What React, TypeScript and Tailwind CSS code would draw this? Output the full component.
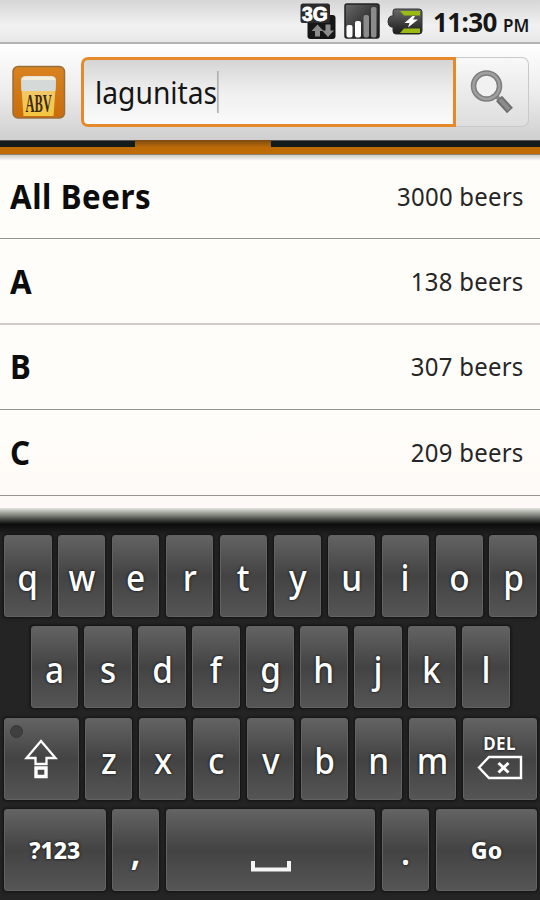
import { useState } from 'react';

interface KeyProps {
  label?: string;
  width?: string;
  className?: string;
  onPress?: () => void;
  children?: React.ReactNode;
}

const BEER_GROUPS = [
  { name: 'All Beers', count: 3000, row: 'h-[84px] border-b border-[#969492] pb-[1px]' },
  { name: 'A', count: 138, row: 'h-[86px] border-b-2 border-[#cfcbc8]' },
  { name: 'B', count: 307, row: 'h-[85px] border-b border-[#969492] pb-[1px]' },
  { name: 'C', count: 209, row: 'h-[86px] border-b border-[#969492] pb-[1px]' },
];

const LETTER_ROWS = [
  ['q', 'w', 'e', 'r', 't', 'y', 'u', 'i', 'o', 'p'],
  ['a', 's', 'd', 'f', 'g', 'h', 'j', 'k', 'l'],
  ['z', 'x', 'c', 'v', 'b', 'n', 'm'],
];

function StatusBar() {
  return (
    <div className="flex h-11 shrink-0 items-start justify-end border-b-2 border-[#b4b4b4] bg-linear-to-b from-[#d6d6d6] via-[#f1f1f1] via-60% to-[#e8e8e8] pr-[11px]">
      <svg className="mt-[3px] mr-[7px]" width="37" height="37" viewBox="0 0 37 37">
        <rect x="7.500" y="12" width="28" height="24" rx="3" fill="#161616" />
        <rect x="0.500" y="0.500" width="29.500" height="19.500" rx="2.500" fill="#2b2b2b" />
        <text transform="translate(2 17.500) scale(0.940 1)" fontFamily="Liberation Sans" fontWeight="bold" fontSize="20.500" fill="#fff" stroke="#fff" strokeWidth="0.900">3G</text>
        <path d="M17.500 21.500l6 6.500h-3.500v5.500h-5V28h-3.500z" fill="#8b8b8b" />
        <path d="M28 34l-6-6.500h3.500V21.500h5v6H34z" fill="#8b8b8b" />
      </svg>
      <svg className="mt-[3px] mr-[7px]" width="36" height="36" viewBox="0 0 36 36">
        <defs>
          <linearGradient id="signal" x1="0" y1="0" x2="1" y2="1">
            <stop offset="0" stopColor="#6a6a6a" />
            <stop offset="0.600" stopColor="#303030" />
            <stop offset="1" stopColor="#1c1c1c" />
          </linearGradient>
        </defs>
        <rect x="1" y="1" width="34" height="34" rx="2" fill="url(#signal)" stroke="#222" strokeWidth="1.500" />
        <rect x="2.500" y="22" width="6" height="12.500" rx="2" fill="#fff" />
        <rect x="11" y="18" width="6" height="16.500" rx="2" fill="#fff" />
        <rect x="19.500" y="12" width="5.500" height="22.500" rx="2" fill="#8b8b8b" />
        <rect x="27" y="4" width="5.500" height="30.500" rx="2" fill="#8b8b8b" />
      </svg>
      <svg className="mt-[8px] mr-[10px]" width="36" height="27" viewBox="0 0 36 27">
        <defs>
          <linearGradient id="cell" x1="0" y1="0" x2="0" y2="1">
            <stop offset="0" stopColor="#6a6a6a" />
            <stop offset="1" stopColor="#1a1a1a" />
          </linearGradient>
        </defs>
        <path d="M8 1h24q3 0 3 3v19q0 3-3 3H9q-3 0-3-3v-4H4q-3-1-3-5.500T4 8h2V4q0-3 2-3z" fill="url(#cell)" stroke="#333" strokeWidth="1" />
        <path d="M13 3h20v4.500H17zM17 20.500h16V25H13z" fill="#9aba14" />
        <path d="M25.500 8l-8 7h5l-1.500 4.500 10-8h-5l2-3.500z" fill="#fff" />
      </svg>
      <div className="flex items-baseline font-bold text-[#171717]">
        <span className="mt-[3px] w-[66px] text-[26px] leading-[38px] tracking-[-0.6px]">11:30</span>
        <span className="ml-[4px] w-[26px] text-[17px] leading-5 font-semibold">PM</span>
      </div>
    </div>
  );
}

function BeerLogo() {
  return (
    <svg className="mt-[21px] ml-[12px] shrink-0" width="54" height="54" viewBox="0 0 54 54">
      <defs>
        <linearGradient id="tile" x1="0" y1="0" x2="0" y2="1">
          <stop offset="0" stopColor="#d98320" />
          <stop offset="1" stopColor="#c96c0c" />
        </linearGradient>
        <linearGradient id="beer" x1="0" y1="0" x2="0" y2="1">
          <stop offset="0" stopColor="#f0c878" />
          <stop offset="1" stopColor="#f5c640" />
        </linearGradient>
      </defs>
      <rect x="1" y="1.500" width="51.500" height="51.500" rx="5" fill="url(#tile)" stroke="#98703c" strokeWidth="1.500" />
      <path d="M9 17l2.500 34h30l2.500-34z" fill="url(#beer)" />
      <path d="M9.500 26l-.5-11q0-4 5-4h25q5 0 5 4l-.5 11z" fill="#d5d9d8" />
      <path d="M9.500 15q1-3.500 5-3.500h24q4 0 5 3.500z" fill="#f3eddc" />
      <text transform="translate(13.500 47) scale(0.480 1)" fontFamily="Liberation Serif" fontWeight="bold" fontSize="26" fill="#3b2c12">ABV</text>
    </svg>
  );
}

function SearchHeader({ query }: { query: string }) {
  return (
    <header className="flex h-24 shrink-0 bg-linear-to-b from-white via-[#ededed] to-[#cfcfcf]">
      <BeerLogo />
      <div className="mt-[13px] ml-[15px] flex h-[70px] w-[375px] items-center rounded-l-[7px] border-[3px] border-[#e58a2c] bg-linear-to-b from-[#d5d5d5] via-[#efefef] to-[#fafafa] pl-[11px]">
        <span className="flex origin-left scale-x-[0.91] items-center">
          <span className="text-[31px] leading-[40px] text-[#151515]">{query}</span>
          <span className="h-[42px] w-[2px] bg-[#b5b5b5]" />
        </span>
      </div>
      <button className="mt-[13px] flex h-[70px] w-[73px] justify-start rounded-r-[7px] border border-l-0 border-[#c9c9c9] bg-linear-to-b from-[#f8f8f8] to-[#dedede]">
        <svg className="mt-[11px] ml-[13px]" width="46" height="46" viewBox="0 0 46 46">
          <path d="M27 27L31 31" stroke="#8a8a8a" strokeWidth="4" />
          <path d="M30 29.500L41 41.500" stroke="#707070" strokeWidth="8" />
          <path d="M31 30.500L40 40.500" stroke="#8c8c8c" strokeWidth="4" />
          <circle cx="17.500" cy="17" r="13" fill="#f1f1f1" stroke="#7e7e7e" strokeWidth="5.500" />
          <circle cx="17.500" cy="17" r="13" fill="none" stroke="#a0a0a0" strokeWidth="2.500" />
        </svg>
      </button>
    </header>
  );
}

function TabStrip() {
  return (
    <div className="h-[15px] shrink-0 border-b border-[#8a826f] bg-linear-to-b from-[#b96a08] to-[#bf6c05]">
      <div className="flex h-[7px] justify-between">
        <div className="w-[135px] border-t border-[#555] bg-[#131b1b]" />
        <div className="flex-1 bg-linear-to-b from-[#7b4a10] to-[#b96a08]" />
        <div className="w-[269px] border-t border-[#555] bg-[#131b1b]" />
      </div>
    </div>
  );
}

function BeerList() {
  return (
    <div className="h-[369px] shrink-0 overflow-hidden bg-linear-to-b from-[#fffdf9] from-75% to-[#fdf8f5]">
      <div className="-mb-[6px] h-[6px] bg-linear-to-b from-black/20 to-transparent" />
      {BEER_GROUPS.map(group => (
        <div key={group.name} className={`flex items-center justify-between pr-[16px] pl-[10px] ${group.row}`}>
          <span className="origin-left scale-x-[0.92] text-[34px] font-bold tracking-[0.6px] text-[#0c0c0c]">{group.name}</span>
          <span className="origin-right scale-x-[0.92] text-[26px] tracking-[0.3px] text-[#262626]">{group.count} beers</span>
        </div>
      ))}
      <div className="h-[12px]" />
      <div className="h-[16px] bg-linear-to-b from-[#e6e6e0] via-[#777a73] to-[#0d0f0c]" />
    </div>
  );
}

function Key({ label, width = 'w-[47.500px]', className = 'text-[37px]', onPress, children }: KeyProps) {
  return (
    <button
      onClick={onPress}
      className={`relative flex h-[82px] shrink-0 items-center justify-center rounded-[3px] border border-[#626262] bg-linear-to-b from-[#636363] via-[#434343] via-50% to-[#555] text-white shadow-[0_0_3px_1px_#111] ${width} ${className}`}
    >
      {label && <span className="[text-shadow:0_0_3px_#000]">{label}</span>}
      {children}
    </button>
  );
}

function Keyboard({ onType, onDelete }: { onType: (key: string) => void; onDelete: () => void }) {
  const [isShifted, setIsShifted] = useState(false);

  const letters = (row: string[]) =>
    row.map(key => {
      const letter = isShifted ? key.toUpperCase() : key;
      return (
        <Key key={key} onPress={() => onType(letter)} className="pt-[2px] text-[37px] font-medium *:scale-x-[0.9]" label={letter} />
      );
    });

  return (
    <div className="flex h-[376px] shrink-0 flex-col gap-[9.400px] bg-linear-to-b from-[#0c0c0c] to-[#242424] to-3% pt-[11px] pl-[4px]">
      <div className="flex gap-[6.450px]">{letters(LETTER_ROWS[0])}</div>
      <div className="flex gap-[6.450px] pl-[26.500px]">{letters(LETTER_ROWS[1])}</div>
      <div className="flex gap-[6.450px]">
        <Key width="w-[74.500px]" onPress={() => setIsShifted(s => !s)}>
          <span className="absolute top-[6px] left-[5px] size-[13px] rounded-full border border-[#373737] bg-[#3f3f3f]" />
          <svg className="mt-[1px]" width="36" height="42" viewBox="0 0 36 42" fill="none" stroke="#fff" strokeWidth="2.300">
            <path d="M18 3L3.500 20H12.500V26H23.500V20H32.500Z" />
            <path d="M13 30h10v8.500h-10z" strokeWidth="3.400" />
          </svg>
        </Key>
        {letters(LETTER_ROWS[2])}
        <Key width="w-[74px]" onPress={onDelete}>
          <span className="flex flex-col items-center [text-shadow:0_0_3px_#000]">
            <span className="text-[17px] leading-[16px] font-bold tracking-[0.3px]">DEL</span>
            <svg className="mt-[3px]" width="46" height="26" viewBox="0 0 46 26" fill="none" stroke="#fff" strokeWidth="2.400">
              <path d="M2 12.500L12 2H44V23H12Z" />
              <path d="M21.500 8l10 9.500M31.500 8l-10 9.500" strokeWidth="3" />
            </svg>
          </span>
        </Key>
      </div>
      <div className="flex gap-[6.450px]">
        <Key width="w-[101.500px]" className="text-[23px] font-extrabold" label="?123" />
        <Key className="pt-[2px] text-[37px] font-semibold" label="," onPress={() => onType(',')} />
        <Key width="w-[209.500px]" onPress={() => onType(' ')}>
          <svg className="mt-[34px]" width="42" height="12" viewBox="0 0 42 12" fill="none" stroke="#f5f5f5" strokeWidth="4">
            <path d="M3 0V8.500H39V0" />
          </svg>
        </Key>
        <Key className="pt-[2px] text-[37px] font-medium" label="." onPress={() => onType('.')} />
        <Key width="w-[101.500px]" className="text-[23px] font-extrabold" label="Go" />
      </div>
    </div>
  );
}

export default function App() {
  const [query, setQuery] = useState('lagunitas');

  return (
    <div className="flex h-[900px] w-[540px] flex-col overflow-hidden bg-[#242424] font-['Noto_Sans',sans-serif]">
      <StatusBar />
      <SearchHeader query={query} />
      <TabStrip />
      <BeerList />
      <Keyboard
        onType={key => setQuery(q => q + key)}
        onDelete={() => setQuery(q => q.slice(0, -1))}
      />
    </div>
  );
}
